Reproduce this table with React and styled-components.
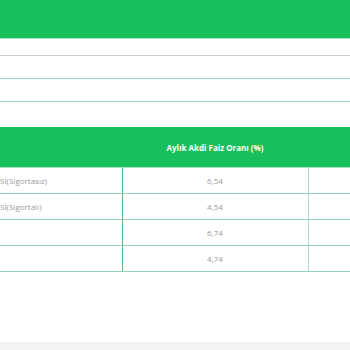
import React from "react";
import styled, { createGlobalStyle } from "styled-components";

const GlobalStyle = createGlobalStyle`
  html, body {
    margin: 0;
    padding: 0;
    background: #ffffff;
    font-family: "Open Sans", "Noto Sans", Arial, sans-serif;
  }
`;

const Page = styled.div`
  width: 350px;
  height: 350px;
  overflow: hidden;
  display: flex;
  flex-direction: column;
  background: #ffffff;
`;

const Band = styled.div`
  height: 38px;
  background: #17c05d;
  border-bottom: 1px solid #a8e2c4;
`;

const BlankRow = styled.div`
  height: ${(p) => p.$h}px;
  border-bottom: ${(p) => (p.$line ? `1px solid ${p.$line}` : "none")};
`;

const Table = styled.table`
  border-collapse: collapse;
  table-layout: fixed;
  width: 350px;
`;

const HeadCell = styled.th`
  height: 40px;
  padding: 0;
  background: #17c05d;
  color: #ffffff;
  font-size: 8px;
  font-weight: 700;
  text-align: center;
  border-bottom: 1px solid #a8e2c4;
`;

const Cell = styled.td`
  height: 25px;
  padding: 0;
  font-size: 8px;
  color: #9a9a9a;
  text-align: ${(p) => (p.$left ? "left" : "center")};
  border-bottom: 1px solid #93d6b4;
  border-right: ${(p) => (p.$edge ? `1px solid ${p.$edge}` : "none")};
  white-space: nowrap;
  overflow: hidden;
`;

const Footer = styled.div`
  margin-top: 70px;
  height: 8px;
  background: #f3f3f3;
`;

const rows = [
  ["Sİ(Sigortasız)", "6,54"],
  ["Sİ(Sigortalı)", "4,54"],
  ["", "6,74"],
  ["", "4,74"],
];

export default function App() {
  return (
    <>
      <GlobalStyle />
      <Page>
        <Band />
        <BlankRow $h={16} $line="#cfcfcf" />
        <BlankRow $h={22} $line="#9ed8bb" />
        <BlankRow $h={22} $line="#9ed8bb" />
        <BlankRow $h={25} />
        <Table>
          <colgroup>
            <col style={{ width: "122px" }} />
            <col style={{ width: "186px" }} />
            <col />
          </colgroup>
          <thead>
            <tr>
              <HeadCell />
              <HeadCell>Aylık Akdi Faiz Oranı (%)</HeadCell>
              <HeadCell />
            </tr>
          </thead>
          <tbody>
            {rows.map(([name, rate]) => (
              <tr key={rate}>
                <Cell $left $edge="#5cb88e">{name}</Cell>
                <Cell $edge="#a9dcc6">{rate}</Cell>
                <Cell />
              </tr>
            ))}
          </tbody>
        </Table>
        <Footer />
      </Page>
    </>
  );
}
